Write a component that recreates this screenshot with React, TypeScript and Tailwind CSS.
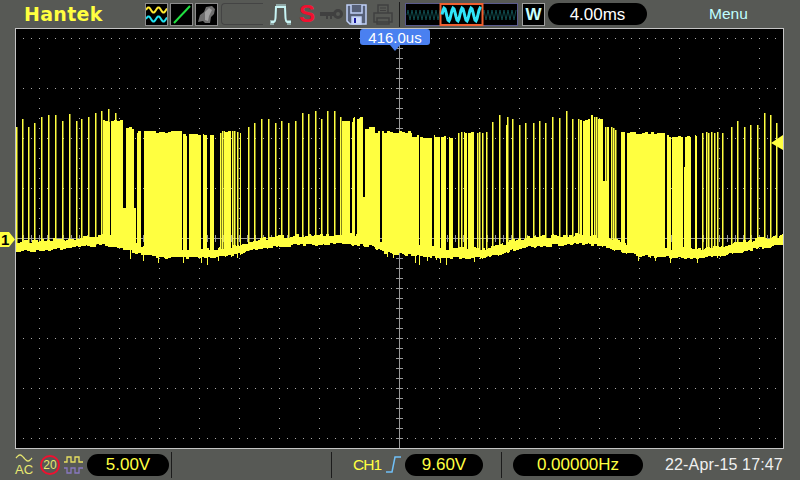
import React from 'react';

// spikes: [x, top]
const SPIKES: number[][] = [
  [16, 127], [22, 119], [28, 127], [34, 123], [41, 117], [48, 115], [55, 115], [62, 121],
  [69, 114], [76, 121], [81, 119], [88, 117], [95, 113], [101, 111], [108, 109], [115, 113],
  [220, 133], [222, 131], [232, 131], [234, 131], [237, 132], [248, 127], [254, 123],
  [261, 119], [268, 119], [275, 123], [281, 121], [288, 123], [295, 121], [302, 113], [308, 114],
  [315, 111], [321, 119], [327, 111], [334, 111], [340, 117], [352, 122], [458, 133], [461, 132],
  [477, 133], [479, 132], [482, 133], [486, 132], [492, 122], [499, 115], [506, 125], [507, 117],
  [512, 119], [519, 125], [525, 123], [533, 123], [539, 121], [545, 123], [552, 117], [559, 118],
  [566, 111], [572, 119], [578, 119], [594, 117], [596, 117], [605, 127], [611, 127], [613, 128],
  [615, 130], [702, 133], [706, 132], [708, 133], [711, 132], [714, 133], [717, 132], [722, 133],
  [731, 127], [737, 121], [744, 127], [750, 125], [757, 125], [764, 113], [770, 115], [776, 123],
];

// solid blocks: [x0, x1, top]
const BLOCKS: number[][] = [
  [103, 110, 121], [111, 123, 120], [126, 134, 128], [137, 141, 132], [144, 182, 132], [183, 187, 135], [189, 201, 135],
  [203, 207, 135], [210, 214, 135], [224, 231, 132], [240, 241, 132], [342, 350, 121], [353, 355, 117], [357, 363, 118],
  [365, 375, 128], [375, 380, 132], [382, 412, 132], [412, 419, 136], [420, 432, 137], [434, 440, 136], [441, 446, 136],
  [449, 453, 137], [464, 467, 132], [468, 474, 132], [580, 582, 121], [583, 590, 120], [591, 593, 114], [598, 603, 119],
  [607, 609, 127], [621, 625, 131], [627, 665, 133], [667, 671, 136], [672, 683, 137], [685, 691, 136], [695, 697, 135],
];

// partly filled stretches: [x0, x1, top]
const LOW_FILLS: number[][] = [[118, 136, 208], [361, 368, 197], [603, 607, 181], [684, 686, 167]];

// noise going below the trace: [x, bottom]
const DROPS: number[][] = [
  [130, 259], [143, 261], [158, 263], [183, 263], [201, 263], [207, 265], [218, 261], [237, 258], [387, 257], [393, 258],
  [415, 263], [419, 265], [427, 261], [436, 260], [440, 263], [446, 265], [474, 262], [481, 258], [638, 261], [655, 261],
  [670, 263], [697, 263], [717, 258],
];

const ENVELOPE: number[][] = [
  [16, 251], [60, 248], [100, 244], [118, 246], [130, 250], [145, 255], [170, 257], [215, 257], [235, 254], [250, 250],
  [270, 246], [300, 244], [345, 243], [370, 245], [385, 252], [410, 254], [450, 257], [485, 257], [500, 253], [520, 247],
  [540, 245], [585, 243], [600, 245], [620, 250], [640, 255], [680, 257], [700, 257], [725, 254], [745, 250], [760, 247],
  [783, 244],
];

function envelope(x: number) {
  for (let i = 1; i < ENVELOPE.length; i++) {
    const [x0, y0] = ENVELOPE[i - 1];
    const [x1, y1] = ENVELOPE[i];
    if (x <= x1) return y0 + ((y1 - y0) * (x - x0)) / (x1 - x0);
  }
  return 244;
}

// repeatable jitter, changes every 3px or so
function jitter(x: number, range: number) {
  const n = Math.sin(Math.floor(x / 3) * 12.9898) * 43758.5453;
  return Math.floor((n - Math.floor(n)) * range);
}

function buildTrace() {
  const tops: number[] = [];
  const bottoms: number[] = [];
  for (let x = 16; x < 783; x++) {
    const e = Math.round(envelope(x));
    bottoms[x] = e + jitter(x, 3);
    tops[x] = e - 7 - jitter(x + 7, 4);
  }
  for (const [x0, x1, top] of LOW_FILLS) for (let x = x0; x < x1; x++) tops[x] = Math.min(tops[x], top);
  for (const [x0, x1, top] of BLOCKS) {
    for (let x = x0; x < x1; x++) tops[x] = top + jitter(x, 3) - 1;
  }
  for (const [x, bottom] of DROPS) bottoms[x] = bottom;
  let d = '';
  for (let x = 16; x < 783; x++) d += `M${x + 0.5} ${tops[x]}V${bottoms[x]}`;
  return d;
}

function buildSpikes() {
  return SPIKES.map(([x, top]) => `M${x + 0.75} ${top}V${Math.round(envelope(x))}`).join('');
}

function Grid() {
  const dots: React.ReactElement[] = [];
  for (let r = 0; r < 9; r++) {
    for (let x = 23; x < 783; x += 8) dots.push(<rect key={`r${r}-${x}`} x={x} y={38 + r * 50} width={1} height={1} />);
  }
  for (let c = 0; c < 19; c++) {
    for (let y = 48; y < 448; y += 10) dots.push(<rect key={`c${c}-${y}`} x={39 + c * 40} y={y} width={1} height={1} />);
  }
  const ticks: React.ReactElement[] = [];
  for (let y = 38; y < 448; y += 10) ticks.push(<rect key={`v${y}`} x={396} y={y} width={7} height={1} />);
  for (let x = 23; x < 783; x += 8) ticks.push(<rect key={`h${x}`} x={x} y={235} width={1} height={7} />);
  return (
    <g shapeRendering="crispEdges">
      <g fill="#a8a8a8">{dots}</g>
      <g fill="#9a9a9a">
        <rect x={399} y={29} width={1} height={419} />
        <rect x={16} y={238} width={767} height={1} />
        {ticks}
      </g>
    </g>
  );
}

function wave(x0: number, x1: number, y: number, amp: number, period: number) {
  let d = `M${x0} ${y}`;
  for (let x = x0 + 1; x <= x1; x++) d += `L${x} ${(y - amp * Math.sin(((x - x0) / period) * Math.PI * 2)).toFixed(1)}`;
  return d;
}

function IconBox({ children }: { children: React.ReactNode }) {
  return <div className="w-[23px] h-[23px] border border-[#8c8c8c] bg-black flex items-center justify-center">{children}</div>;
}

function Pill({ width, color, children }: { width: string; color: string; children: React.ReactNode }) {
  return (
    <div className={`${width} ${color} h-[22px] rounded-[11px] bg-black flex items-center justify-center text-[17px] leading-none`}>
      {children}
    </div>
  );
}

function Divider() {
  return <div className="w-px h-[26px] bg-[#1c1c1c]" />;
}

export default function App() {
  return (
    <div className="w-[800px] h-[480px] bg-[#575955] flex flex-col overflow-hidden font-['Liberation_Sans',sans-serif]">
      {/* top bar */}
      <div className="h-[28px] flex items-center shrink-0">
        <span className="ml-[24px] w-[121px] font-['DejaVu_Sans',sans-serif] font-bold text-[19px] tracking-[0.3px] text-[#ffff40] leading-none">
          Hantek
        </span>
        <div className="flex gap-[2px]">
          <IconBox>
            <svg width="21" height="21" viewBox="0 0 21 21" fill="none" strokeWidth="2">
              <path d={wave(0, 21, 6, 2.5, 10)} stroke="#ffe830" />
              <path d={wave(0, 21, 15, 2.5, 10)} stroke="#20e0f0" />
            </svg>
          </IconBox>
          <IconBox>
            <svg width="21" height="21" viewBox="0 0 21 21" fill="none">
              <path d="M3 19L19 2" stroke="#20e040" strokeWidth="2" />
            </svg>
          </IconBox>
          <IconBox>
            <svg width="21" height="21" viewBox="0 0 21 21">
              <path d="M2 18L4 11L8 8L10 3L16 2L19 5L18 10L15 13L14 19L9 19L7 17Z" fill="#6f6f6f" />
              <path d="M9 8L13 4L16 6L13 12L12 17L9 16Z" fill="#a0a0a0" />
            </svg>
          </IconBox>
        </div>
        <div className="ml-[3px] w-[42px] h-[22px] border-l border-t border-b border-[#444444] rounded-l-[4px]" />
        <svg className="ml-[7px]" width="22" height="22" viewBox="0 0 22 22" fill="none" stroke="#c8f4f4" strokeWidth="2">
          <path d="M1 19H4Q5 19 5.500 15L6 4H15L15.500 15Q16 19 17 19H21" />
          <path d="M7 1V4M9 1V4M11 1V4M13 1V4M15 1V4M1 17V22M3 17V22M18 17V22M20 17V22" strokeWidth="1" />
        </svg>
        <span className="ml-[7px] w-[17px] text-[24px] font-bold text-[#f01030] leading-none">S</span>
        <svg className="ml-[4px]" width="24" height="12" viewBox="0 0 24 12" fill="#404040">
          <path d="M0 4H14V8H12V11H10V8H8V11H6V8H0Z" />
          <path d="M18 1A5 5 0 1 1 18 11A5 5 0 1 1 18 1ZM18 4A2 2 0 1 0 18 8A2 2 0 1 0 18 4Z" fillRule="evenodd" />
        </svg>
        <svg className="ml-[2px]" width="21" height="21" viewBox="0 0 21 21" fill="none" stroke="#c0d0f8" strokeWidth="1.500">
          <path d="M1 1H20V20H4L1 17Z" fill="#566078" />
          <path d="M5 1V9H16V1" fill="#566078" />
          <path d="M6 20V13H15V20Z" fill="#d0dcf8" />
          <path d="M9 14V19" stroke="#1818a0" strokeWidth="2" />
        </svg>
        <svg className="ml-[6px]" width="20" height="21" viewBox="0 0 20 21" fill="none" stroke="#404040" strokeWidth="1.500">
          <path d="M5 9V1H15V9" />
          <path d="M7 4H13M7 6.500H13" strokeWidth="1" />
          <path d="M1 9H19V18H1Z" />
          <path d="M4 14H16V20H4Z" />
        </svg>
        <div className="ml-[6px] w-px h-[25px] bg-[#1c1c1c]" />
        <svg className="ml-[5px]" width="113" height="23" viewBox="0 0 113 23" fill="none">
          <rect x="0.500" y="0.500" width="112" height="22" fill="#000" stroke="#5a5a8c" />
          <path d={wave(2, 35, 12, 5, 4)} stroke="#0f4a4c" />
          <path d={wave(78, 111, 12, 5, 4)} stroke="#0f4a4c" />
          <rect x="35.500" y="1" width="42" height="21" fill="#000" stroke="#f06030" strokeWidth="2" />
          <path d={wave(37, 76, 11.500, 6.500, 9)} stroke="#30e4f8" strokeWidth="3" />
        </svg>
        <div className="ml-[4px] w-[23px] h-[23px] border border-[#a0a0a0] bg-black flex items-center justify-center text-[17px] font-bold text-[#c8ffff] leading-none">
          W
        </div>
        <div className="ml-[3px]">
          <Pill width="w-[99px]" color="text-white">4.00ms</Pill>
        </div>
        <span className="ml-[62px] text-[15.500px] text-[#c0ffff] leading-none">Menu</span>
      </div>

      {/* plot row */}
      <div className="relative h-[421px] pl-[15px] shrink-0">
        <div className="w-[769px] h-[421px] border border-[#c4c4c4] bg-black">
          <svg className="block" width="767" height="419" viewBox="16 29 767 419">
            <Grid />
            <path d={buildTrace()} stroke="#ffff40" strokeWidth="1" fill="none" shapeRendering="crispEdges" />
            <path d={buildSpikes()} stroke="#ffff40" strokeWidth="1.500" fill="none" />
            <path d="M771 143L783 135V150Z" fill="#ffff40" />
          </svg>
        </div>

        {/* channel marker */}
        <div className="absolute left-0 top-[204px] w-[15px] h-[15px] bg-[#ffff40] [clip-path:polygon(0_0,60%_0,100%_50%,60%_100%,0_100%)] flex items-center pl-[1px] text-[15px] font-bold leading-none text-black">
          1
        </div>

        {/* trigger time tag */}
        <div className="absolute left-[360px] top-px w-[70px] h-[16px] rounded-[3px] bg-[#4a80f0] flex items-center justify-center text-[15px] leading-none text-white">
          416.0us
        </div>
        <div className="absolute left-[390px] top-[17px] w-0 h-0 border-x-[5px] border-x-transparent border-t-[6px] border-t-[#4a80f0]" />
      </div>

      {/* bottom bar */}
      <div className="flex-1 flex items-center">
        <div className="ml-[15px] w-[18px] h-[22px] flex flex-col items-center text-[#e8e870] leading-none">
          <svg width="18" height="8" viewBox="0 0 18 8" fill="none">
            <path d={wave(1, 17, 4, 3, 16)} stroke="#e8e870" strokeWidth="1.300" />
          </svg>
          <span className="text-[13px] mt-[1px]">AC</span>
        </div>
        <div className="ml-[7px] w-[20px] h-[20px] shrink-0 rounded-full border-2 border-[#f01030] flex items-center justify-center text-[12px] text-[#e8e870] leading-none">
          20
        </div>
        <svg className="ml-[4px]" width="19" height="20" viewBox="0 0 19 20" fill="none" strokeWidth="1.300">
          <path d="M0 7H3V2H7V7H11V2H15V7H19" stroke="#e8e060" />
          <path d="M0 13H3V18H7V13H11V18H15V13H19" stroke="#8878c0" />
        </svg>
        <div className="ml-[4px]">
          <Pill width="w-[82px]" color="text-[#ffff40]">5.00V</Pill>
        </div>
        <div className="ml-[2px]"><Divider /></div>
        <div className="ml-[159px]"><Divider /></div>
        <span className="ml-[21px] w-[33px] text-[15.500px] tracking-[-1px] text-[#ffff40] leading-none">CH1</span>
        <svg width="15" height="19" viewBox="0 0 15 19" fill="none" stroke="#70c0f8" strokeWidth="1.500">
          <path d="M0 17H6L9 2H15" />
        </svg>
        <div className="ml-[4px]">
          <Pill width="w-[78px]" color="text-[#ffff40]">9.60V</Pill>
        </div>
        <div className="ml-[18px]"><Divider /></div>
        <div className="ml-[11px]">
          <Pill width="w-[130px]" color="text-[#ffff40]">0.00000Hz</Pill>
        </div>
        <span className="ml-[22px] text-[16px] tracking-[0.15px] text-[#f0f0f0] leading-none whitespace-nowrap">22-Apr-15 17:47</span>
      </div>
    </div>
  );
}
